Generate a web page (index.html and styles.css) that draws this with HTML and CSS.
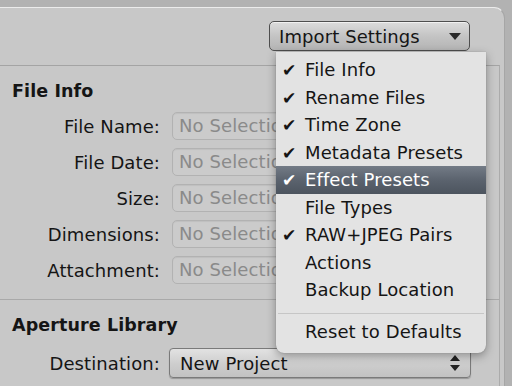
FILE: index.html
```html
<!DOCTYPE html>
<html lang="en">
<head>
  <meta charset="UTF-8" />
  <title>Import Settings</title>
  <link rel="stylesheet" href="styles.css">
</head>
<body>
  <div class="window">
    <div class="toolbar">
      <button class="settings-btn">Import Settings <span class="triangle"></span></button>
    </div>

    <div class="content">
      <section class="group">
        <h2 class="group-title">File Info</h2>
        <div class="rows">
          <div class="row"><label>File Name:</label><div class="field">No Selection</div></div>
          <div class="row"><label>File Date:</label><div class="field">No Selection</div></div>
          <div class="row"><label>Size:</label><div class="field">No Selection</div></div>
          <div class="row"><label>Dimensions:</label><div class="field">No Selection</div></div>
          <div class="row"><label>Attachment:</label><div class="field">No Selection</div></div>
        </div>
      </section>

      <section class="group last">
        <h2 class="group-title">Aperture Library</h2>
        <div class="row popup-row">
          <label>Destination:</label>
          <div class="popup">New Project
            <svg class="updown" width="12" height="18" viewBox="0 0 12 18">
              <path d="M6 1 L11 7 H1 Z M6 17 L11 11 H1 Z" fill="#222"/>
            </svg>
          </div>
        </div>
      </section>
    </div>
  </div>

  <!-- menu abierto del boton Import Settings -->
  <ul class="menu">
    <li class="checked">File Info</li>
    <li class="checked">Rename Files</li>
    <li class="checked">Time Zone</li>
    <li class="checked">Metadata Presets</li>
    <li class="checked active">Effect Presets</li>
    <li>File Types</li>
    <li class="checked">RAW+JPEG Pairs</li>
    <li>Actions</li>
    <li>Backup Location</li>
    <li class="sep"></li>
    <li>Reset to Defaults</li>
  </ul>
</body>
</html>
```

FILE: styles.css
```css
body {
  margin: 0;
  background: #b2b2b2;
  font-family: "DejaVu Sans", "Lucida Grande", sans-serif;
  font-size: 18px;
  letter-spacing: 0.1px;
  color: #151515;
  width: 512px;
  height: 386px;
  overflow: hidden;
  position: relative;
}
.window {
  margin-top: 7px;
  margin-right: 7px;
  height: 379px;
  background: #c8c8c8;
  border-top: 1px solid #ececec;
  border-right: 1px solid #a6a6a6;
  border-top-right-radius: 11px;
  box-sizing: border-box;
}
.toolbar {
  height: 57px;
  display: flex;
  justify-content: flex-end;
  align-items: flex-start;
  padding: 13px 34px 0 0;
  box-sizing: border-box;
}
.settings-btn {
  width: 201px;
  height: 30px;
  border: 1px solid #4e4e4e;
  border-radius: 5px;
  background: linear-gradient(#dcdcdc, #c4c4c4 50%, #b4b4b4);
  box-shadow: inset 0 1px 0 rgba(255,255,255,0.6);
  font: inherit;
  letter-spacing: inherit;
  color: #151515;
  display: flex;
  align-items: center;
  justify-content: space-between;
  padding: 0 8px 0 9px;
}
.triangle {
  width: 0;
  height: 0;
  border-left: 6px solid transparent;
  border-right: 6px solid transparent;
  border-top: 7px solid #2a2a2a;
}
.content {
  border-top: 1px solid #a4a4a4;
  border-right: 1px solid #ababab;
  margin-right: 4px;
  height: 321px;
}
.group {
  padding: 13px 0 15px 12px;
  border-bottom: 1px solid #a9a9a9;
}
.group.last {
  border-bottom: none;
  padding-top: 13px;
}
.group-title {
  margin: 0;
  font-size: 17.5px;
  line-height: 24px;
  font-weight: bold;
}
.rows {
  margin-top: 9px;
  display: flex;
  flex-direction: column;
  gap: 8px;
}
.row {
  display: flex;
  align-items: center;
  gap: 12px;
}
.row label {
  width: 148px;
  text-align: right;
}
.field {
  width: 296px;
  height: 28px;
  line-height: 26px;
  box-sizing: border-box;
  border: 1px solid #b2b2b2;
  border-radius: 5px;
  background: #cbcbcb;
  color: #8a8a8a;
  padding-left: 6px;
  box-shadow: inset 0 1px 1px rgba(0,0,0,0.06);
}
.popup-row {
  margin-top: 11px;
  gap: 9px;
}
.popup {
  width: 302px;
  height: 30px;
  box-sizing: border-box;
  border: 1px solid #7a7a7a;
  border-radius: 4px;
  background: linear-gradient(#e2e2e2, #cdcdcd 55%, #c2c2c2);
  box-shadow: 0 1px 1px rgba(0,0,0,0.25);
  display: flex;
  align-items: center;
  justify-content: space-between;
  padding: 0 9px 0 10px;
}
.menu {
  position: absolute;
  left: 276px;
  top: 52px;
  width: 210px;
  margin: 0;
  padding: 4px 0 8px;
  list-style: none;
  background: #e3e3e3;
  border-radius: 0 0 8px 8px;
  box-shadow: 0 3px 10px rgba(0,0,0,0.35), 0 0 1px rgba(0,0,0,0.3);
}
.menu li {
  height: 27.5px;
  line-height: 28.5px;
  padding-left: 29px;
  position: relative;
  white-space: nowrap;
}
.menu li.checked::before {
  content: "\2714";
  position: absolute;
  left: 6px;
  font-size: 17px;
}
.menu li.active {
  color: #fff;
  background: linear-gradient(#737b86, #5b636e 50%, #4c545e);
}
.menu li.sep {
  height: 1px;
  margin: 9px 2px 4px;
  padding: 0;
  background: #c6c6c6;
}
```
